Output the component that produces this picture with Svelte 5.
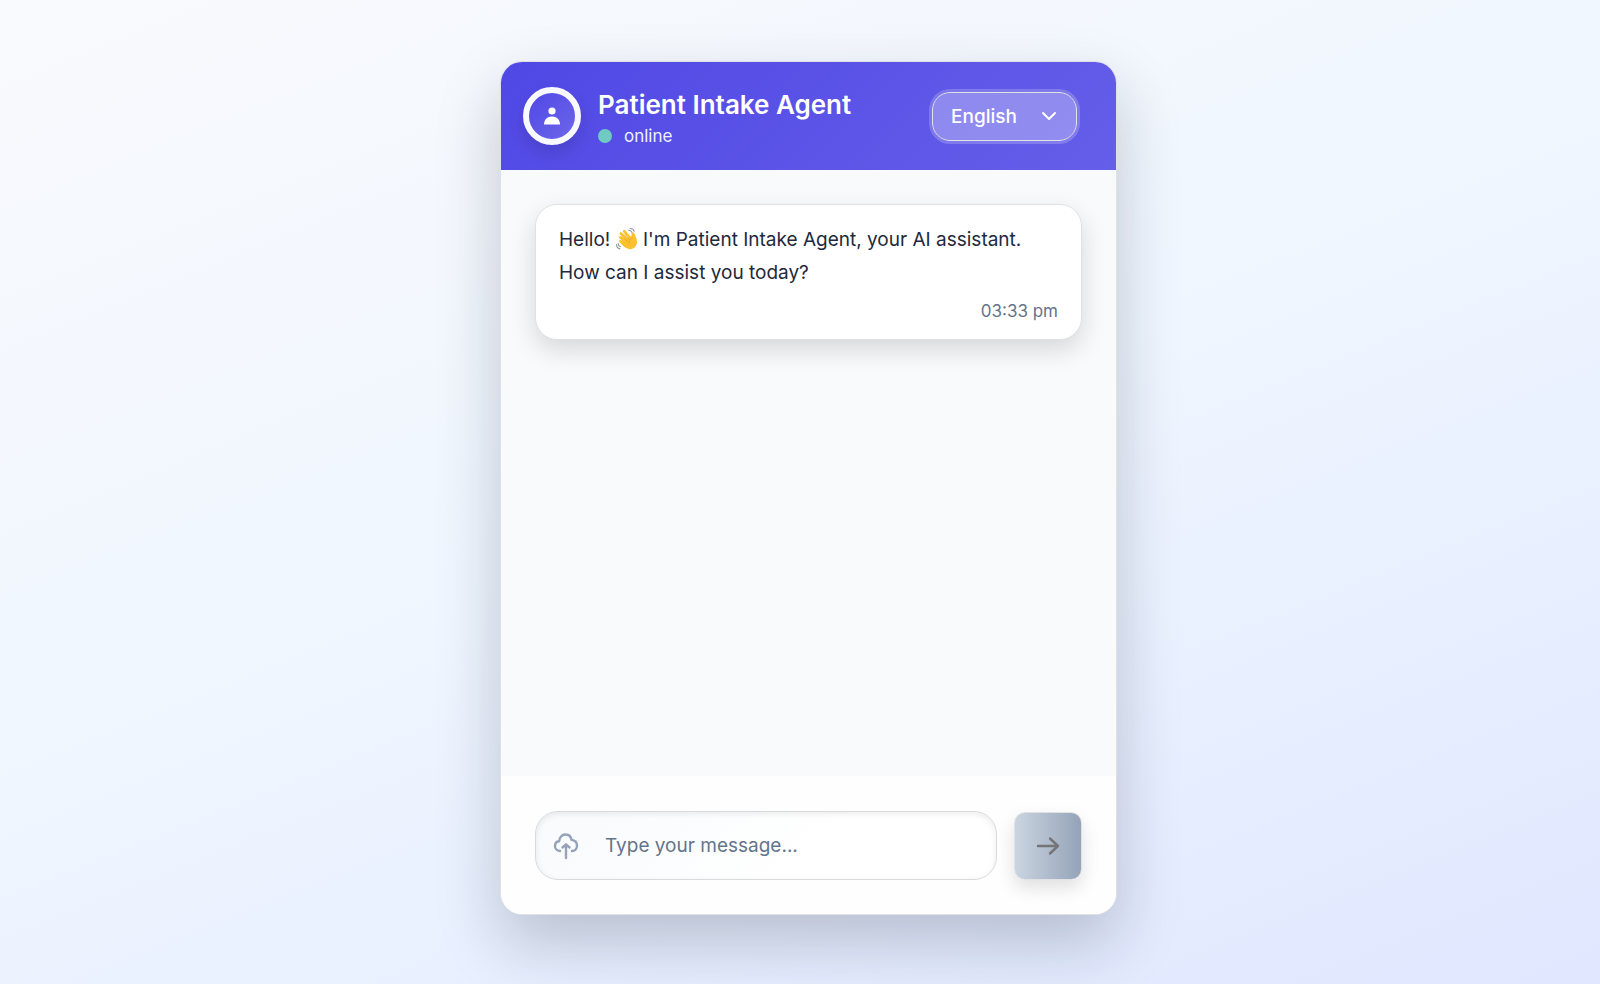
<script>
	const agent = 'Patient Intake Agent';
	const languages = ['English', 'Spanish', 'French', 'German'];

	let language = 'English';
	let draft = '';
	let file_input;

	let messages = [
		{
			text: `I'm ${agent}, your AI assistant. How can I assist you today?`,
			greeting: 'Hello!',
			time: '03:33 pm'
		}
	];

	const send = () => {
		const text = draft.trim();
		if (!text) return;

		const time = new Date()
			.toLocaleTimeString('en-US', { hour: '2-digit', minute: '2-digit' })
			.toLowerCase();

		messages = [...messages, { text, time, own: true }];
		draft = '';
	};
</script>

<main class="page">
	<section class="chat" aria-label={agent}>
		<header class="chat-header">
			<div class="avatar">
				<svg viewBox="0 0 18 18" width="18" height="18" aria-hidden="true">
					<circle cx="9" cy="4" r="3.6" />
					<path d="M1 17.5C1 12.8 4.2 9.6 9 9.6s8 3.2 8 7.9z" />
				</svg>
			</div>

			<div class="identity">
				<h1>{agent}</h1>
				<p class="status"><span class="dot"></span>online</p>
			</div>

			<div class="language">
				<select bind:value={language} aria-label="Language">
					{#each languages as name}
						<option value={name}>{name}</option>
					{/each}
				</select>
				<svg viewBox="0 0 16 10" width="16" height="10" aria-hidden="true">
					<path d="M2 2l6 6 6-6" />
				</svg>
			</div>
		</header>

		<div class="messages" aria-live="polite">
			{#each messages as message}
				<article class="message" class:own={message.own}>
					<p>
						{#if message.greeting}
							{message.greeting}{' '}
							<svg class="wave" viewBox="0 0 40 40" width="22" height="22" aria-hidden="true">
								<g class="fingers">
									<path d="M8 17l13 11" />
									<path d="M9 10l15 15" />
									<path d="M15 6l13 15" />
									<path d="M8 24l11 9" />
								</g>
								<path class="palm" d="M15 21L26 15c2 2 3 0 2-4 0-4 5-4 6 0 1 5 5 9 4 16-1 10-11 14-18 10-4-2-8-5-11-9z" />
								<path class="crease" d="M13 17l8 8M15 12l9 9M30 18c-5 1-7 4-6 9" />
								<path class="motion" d="M23 4c3 0 5 1 6 4M26 1c4 0 6 2 7 5M4 28c0 3 1 5 4 6M1 30c0 4 2 7 6 8" />
							</svg>
						{/if}
						{message.text}
					</p>
					<time>{message.time}</time>
				</article>
			{/each}
		</div>

		<form class="composer" on:submit|preventDefault={send}>
			<div class="field">
				<button class="upload" type="button" aria-label="Upload a file" on:click={() => file_input.click()}>
					<svg viewBox="0 0 24 26" width="24" height="26" aria-hidden="true">
						<path d="M6 18C2.800 18 1 15.800 1 13c0-2.600 1.800-4.500 4.200-4.800C5.200 4.500 8 1.500 11.500 1.500c3.200 0 5.500 2.200 6 5.400C20.800 7.200 23 9.500 23 12.800c0 3-1.900 5.200-5 5.200" />
						<path d="M12 25V12M8.500 14.500L12 11.300l3.500 3.200" />
					</svg>
				</button>
				<input class="file" type="file" aria-label="File" bind:this={file_input}>
				<input class="text" type="text" placeholder="Type your message..." aria-label="Message" bind:value={draft}>
			</div>
			<button class="send" type="submit" aria-label="Send">
				<svg viewBox="0 0 22 18" width="22" height="18" aria-hidden="true">
					<path d="M1 9h20M13 1.500L21 9l-8 7.500" />
				</svg>
			</button>
		</form>
	</section>
</main>

<style>
	:global(body) {
		background: #fff;
	}

	.page {
		box-sizing: border-box;
		display: flex;
		justify-content: center;
		height: calc(100vh - 9px);
		padding: 61px 0 69px 17px;
		background: linear-gradient(158deg, #f9fafd 0%, #eff6ff 50%, #e0e7ff 100%);
		font-family: Inter, 'Open Sans', sans-serif;
		color: #1e293b;
	}

	.chat {
		box-sizing: border-box;
		display: flex;
		flex-direction: column;
		width: 100%;
		max-width: 617px;
		overflow: hidden;
		border: 1px solid #dfe1e4;
		border-radius: 22px;
		background: #fff;
		box-shadow: 0 28px 64px rgba(15, 23, 42, 0.22);
	}

	.chat-header {
		display: flex;
		align-items: center;
		gap: 17px;
		padding: 23px 39px 23px 22px;
		background: linear-gradient(135deg, #5048e5, #655ee9);
		color: #fff;
	}

	.avatar {
		box-sizing: border-box;
		display: flex;
		flex: none;
		align-items: center;
		justify-content: center;
		width: 58px;
		height: 58px;
		border: 6px solid #f8f8ff;
		border-radius: 50%;
		background: linear-gradient(135deg, #5048e5, #6d66ea);
		box-shadow: 0 8px 16px rgba(0, 0, 0, 0.12);
	}

	.avatar svg {
		fill: #fff;
	}

	.identity {
		flex: 1;
	}

	h1 {
		margin: 0;
		font-size: 26px;
		font-weight: 600;
		line-height: 40px;
	}

	.status {
		display: flex;
		align-items: center;
		gap: 12px;
		margin: 0;
		font-size: 17px;
		line-height: 22px;
		color: #f0f0ff;
	}

	.dot {
		width: 14px;
		height: 14px;
		border-radius: 50%;
		background: #6ecac2;
	}

	.language {
		display: grid;
		align-items: center;
	}

	.language > * {
		grid-area: 1 / 1;
	}

	select {
		box-sizing: border-box;
		width: 145px;
		height: 49px;
		padding: 0 40px 0 18px;
		appearance: none;
		border: 1px solid #e2e2e2;
		border-radius: 18px;
		outline: none;
		background: rgba(255, 255, 255, 0.3);
		box-shadow: 0 0 0 3px rgba(255, 255, 255, 0.2);
		font: 500 19px Inter, sans-serif;
		color: #fff;
	}

	option {
		color: #1e293b;
	}

	.language svg {
		justify-self: end;
		margin-right: 20px;
		fill: none;
		stroke: #fff;
		stroke-width: 2;
		stroke-linecap: round;
		stroke-linejoin: round;
		pointer-events: none;
	}

	.messages {
		display: flex;
		flex: 1;
		flex-direction: column;
		gap: 18px;
		min-height: 0;
		padding: 34px;
		overflow-y: auto;
		background: #f9fafc;
	}

	.message {
		padding: 18px 23px 15px;
		border: 1px solid #dfe1e4;
		border-radius: 22px;
		background: #fff;
		box-shadow: 0 10px 26px rgba(0, 0, 0, 0.14);
	}

	.own {
		background: #eef2ff;
	}

	.message p {
		margin: 0;
		font-size: 19px;
		line-height: 33px;
	}

	time {
		display: block;
		margin-top: 9px;
		font-size: 17px;
		line-height: 26px;
		text-align: right;
		color: #64748b;
	}

	.wave {
		vertical-align: -4px;
	}

	.fingers {
		fill: none;
		stroke: #fcc22d;
		stroke-width: 5;
		stroke-linecap: round;
	}

	.palm {
		fill: #fcc22d;
	}

	.crease {
		fill: none;
		stroke: #dd9428;
		stroke-width: 1;
		stroke-linecap: round;
	}

	.motion {
		fill: none;
		stroke: #8c949c;
		stroke-width: 2;
		stroke-linecap: round;
	}

	.composer {
		display: flex;
		align-items: center;
		gap: 17px;
		padding: 35px 34px 34px;
		background: #fefefe;
	}

	.field {
		box-sizing: border-box;
		display: flex;
		flex: 1;
		align-items: center;
		gap: 15px;
		height: 69px;
		padding: 0 18px 0 6px;
		border: 1px solid #d8dadd;
		border-radius: 23px;
		background: linear-gradient(135deg, #f8fafc, #fff 60%);
		box-shadow: inset 0 2px 6px rgba(0, 0, 0, 0.08);
	}

	button {
		display: flex;
		align-items: center;
		justify-content: center;
		cursor: pointer;
	}

	.upload {
		width: 48px;
		height: 48px;
		padding: 0;
		border: 0;
		background: none;
	}

	.upload svg {
		fill: none;
		stroke: #94a3b8;
		stroke-width: 2.4;
		stroke-linecap: round;
		stroke-linejoin: round;
		overflow: visible;
	}

	.file {
		display: none;
	}

	.text {
		flex: 1;
		min-width: 0;
		height: 48px;
		padding: 0;
		border: 0;
		outline: none;
		background: none;
		font: 19px Inter, sans-serif;
		color: #1e293b;
	}

	.text::placeholder {
		color: #64748b;
		opacity: 1;
	}

	.send {
		box-sizing: border-box;
		width: 68px;
		height: 68px;
		padding: 0;
		border: 1px solid #dfe1e4;
		border-radius: 11px;
		background: linear-gradient(90deg, #cbd5e1, #94a3b8);
		box-shadow: 0 8px 18px rgba(0, 0, 0, 0.12);
	}

	.send svg {
		fill: none;
		stroke: #757575;
		stroke-width: 2.4;
		stroke-linecap: round;
		stroke-linejoin: round;
		overflow: visible;
	}
</style>
